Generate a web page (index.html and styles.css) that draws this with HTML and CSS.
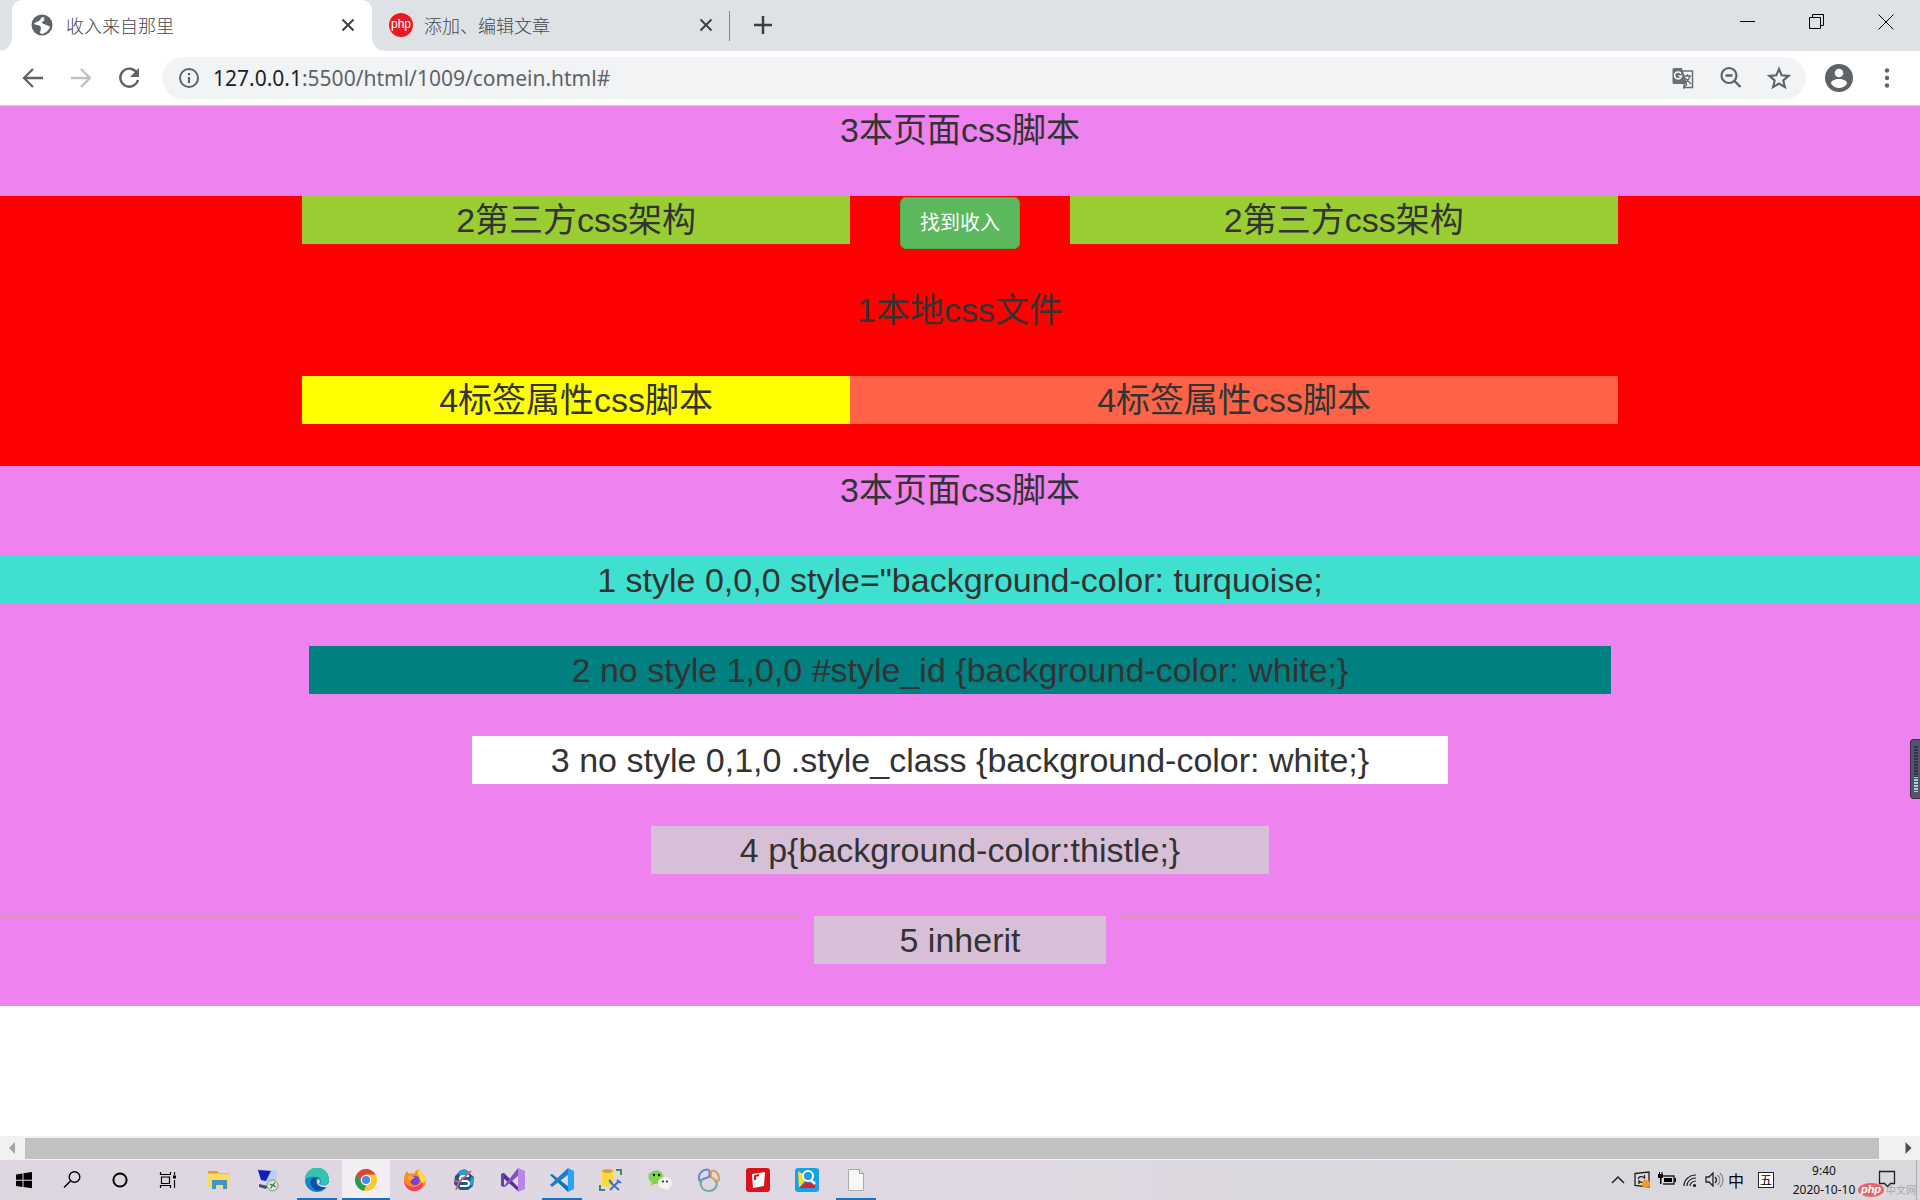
FILE: index.html
```html
<!DOCTYPE html>
<html lang="zh">
<head>
<meta charset="utf-8">
<title>收入来自那里</title>
<link rel="stylesheet" href="styles.css">
</head>
<body>
<header class="tabs">
  <div class="tab tab-active">
    <svg class="fav" viewBox="0 0 22 22"><circle cx="11" cy="11" r="10.500" fill="#5f6368"/><path d="M13 3c-4 0-3 3-5 4s-4 1-5 3l3 1c2 0 4 1 4 3l-1 5 2 1c4-1 7-4 8-7l-3-3h-4l-1-2 3-2z" fill="#fff"/><path d="M12 4l6 3 1 5-4-1-3-2 2-2z" fill="#5f6368"/></svg>
    <span class="tab-title">收入来自那里</span>
    <button class="tab-close" aria-label="关闭"><svg viewBox="0 0 14 14"><path d="M1.500 1.500l11 11M12.500 1.500l-11 11" stroke="#3c4043" stroke-width="2"/></svg></button>
  </div>
  <div class="tab">
    <span class="php-fav">php</span>
    <span class="tab-title">添加、编辑文章</span>
    <button class="tab-close" aria-label="关闭"><svg viewBox="0 0 14 14"><path d="M1.500 1.500l11 11M12.500 1.500l-11 11" stroke="#3c4043" stroke-width="2"/></svg></button>
  </div>
  <button class="new-tab" aria-label="新标签页"><svg viewBox="0 0 18 18"><path d="M9 0v18M0 9h18" stroke="#3c4043" stroke-width="2.500"/></svg></button>
  <div class="win">
    <button aria-label="最小化"><svg viewBox="0 0 16 16"><path d="M0 7.500h15" stroke="#000"/></svg></button>
    <button aria-label="还原"><svg viewBox="0 0 16 16"><path d="M.5 3.500h11v11H.5zM3.500 3.500v-3h11v11h-3" fill="none" stroke="#000"/></svg></button>
    <button aria-label="关闭"><svg viewBox="0 0 16 16"><path d="M.5.5l15 15M15.500.5l-15 15" stroke="#000"/></svg></button>
  </div>
</header>
<nav class="toolbar">
  <button class="nav-btn" aria-label="后退"><svg viewBox="0 0 24 24"><path d="M22 12H4M12 3l-9 9 9 9" fill="none" stroke="#5f6368" stroke-width="2.300"/></svg></button>
  <button class="nav-btn" aria-label="前进"><svg viewBox="0 0 24 24"><path d="M2 12h18M12 3l9 9-9 9" fill="none" stroke="#bdc1c6" stroke-width="2.300"/></svg></button>
  <button class="nav-btn" aria-label="刷新"><svg viewBox="0 0 24 24"><path d="M20 7a9 9 0 1 0 1 7" fill="none" stroke="#5f6368" stroke-width="2.400"/><path d="M22 2v9h-9z" fill="#5f6368"/></svg></button>
  <div class="omnibox">
    <svg class="ico" viewBox="0 0 24 24"><circle cx="12" cy="12" r="9" fill="none" stroke="#5f6368" stroke-width="2"/><path d="M12 11v6M12 7v2.200" stroke="#5f6368" stroke-width="2.200"/></svg>
    <a class="url" href="#"><b>127.0.0.1</b>:5500/html/1009/comein.html#</a>
    <button class="omni-btn" aria-label="翻译"><svg viewBox="0 0 24 24"><path d="M11 5h10.500v16.500H12" fill="none" stroke="#6b6f73" stroke-width="1.500"/><path d="M3 2h8l5 16H3a1.500 1.500 0 0 1-1.500-1.500v-13A1.500 1.500 0 0 1 3 2z" fill="#6b6f73"/><path d="M10 7.500A3.500 3.500 0 1 0 10.500 10H7.500" fill="none" stroke="#fff" stroke-width="1.500"/><path d="M13 10h7M16.500 8v2M19 10c-1 4-3 5-5 7M14 12l6 6M13 18v3.500l3-3.500" fill="none" stroke="#6b6f73" stroke-width="1.400"/></svg></button>
    <button class="omni-btn" aria-label="缩放"><svg viewBox="0 0 24 24"><circle cx="10" cy="9.500" r="7.500" fill="none" stroke="#5f6368" stroke-width="2.200"/><path d="M6.500 9.500h7M15 14.500l6.500 6.500" stroke="#5f6368" stroke-width="2.400"/></svg></button>
    <button class="omni-btn" aria-label="收藏"><svg viewBox="0 0 24 24"><path d="M12 3l2.700 6.300 6.800.6-5.200 4.500 1.600 6.700L12 17.500l-5.900 3.600 1.600-6.700-5.200-4.500 6.800-.6z" fill="none" stroke="#5f6368" stroke-width="2.100"/></svg></button>
  </div>
  <button class="avatar" aria-label="用户"><svg viewBox="0 0 28 28"><circle cx="14" cy="14" r="14" fill="#5f6368"/><circle cx="14" cy="9" r="4.300" fill="#fff"/><path d="M6 19.500c0-6 16-6 16 0-3.500 6-12.500 6-16 0z" fill="#fff"/></svg></button>
  <button class="nav-btn" aria-label="菜单"><svg viewBox="0 0 24 24" fill="#5f6368"><circle cx="12" cy="4.500" r="2.200"/><circle cx="12" cy="12" r="2.200"/><circle cx="12" cy="19.500" r="2.200"/></svg></button>
</nav>
<main class="page">
  <section class="violet"><p>3本页面css脚本</p></section>
  <section class="red">
    <div class="grid">
      <p class="green">2第三方css架构</p>
      <div class="mid"><button class="find">找到收入</button></div>
      <p class="green">2第三方css架构</p>
    </div>
    <p>1本地css文件</p>
    <div class="grid">
      <p class="yellow">4标签属性css脚本</p>
      <p class="tomato">4标签属性css脚本</p>
    </div>
  </section>
  <section class="violet">
    <p>3本页面css脚本</p>
    <p class="turquoise">1 style 0,0,0 style="background-color: turquoise;</p>
    <p class="teal">2 no style 1,0,0 #style_id {background-color: white;}</p>
    <p class="white">3 no style 0,1,0 .style_class {background-color: white;}</p>
    <p class="thistle">4 p{background-color:thistle;}</p>
    <div class="split"><hr><p class="inherit">5 inherit</p><hr></div>
  </section>
  <div class="meter"></div>
</main>
<div class="scroll">
  <svg viewBox="0 0 25 24"><path d="M15 6v12l-6-6z" fill="#a3a3a3"/></svg>
  <div class="thumb"></div>
  <svg class="scroll-end" viewBox="0 0 40 24"><path d="M26 6v12l6-6z" fill="#505050"/></svg>
</div>
<footer class="taskbar">
  <div class="sys">
    <button aria-label="开始"><svg viewBox="0 0 24 24"><path d="M4 6.500l6.500-1v6.300H4zM11.500 5.300L20 4v7.800h-8.500zM4 12.700h6.500V19L4 18zM11.500 12.700H20v7.600l-8.500-1.200z"/></svg></button>
    <button aria-label="搜索"><svg viewBox="0 0 24 24"><circle cx="14.500" cy="9" r="5.300" fill="none" stroke="#000" stroke-width="1.400"/><path d="M10.500 13L4 19.500" stroke="#000" stroke-width="1.500"/></svg></button>
    <button aria-label="Cortana"><svg viewBox="0 0 24 24"><circle cx="12" cy="12" r="6.600" fill="none" stroke="#000" stroke-width="2"/></svg></button>
    <button aria-label="任务视图"><svg viewBox="0 0 24 24"><path d="M4.500 4v2.500h10V4M5.500 9h8v6.500h-8zM4.500 20v-2.500h10V20M18.500 4v3M18.500 12v8" fill="none" stroke="#000" stroke-width="1.200"/><path d="M17 7.500h3v3h-3z"/></svg></button>
  </div>
  <div class="apps">
    <button aria-label="文件"><svg viewBox="0 0 24 24"><path d="M1 3h9l2 2h10v5H1z" fill="#dea024"/><path d="M1 5.500h22V20H1z" fill="#ffd968"/><path d="M5 21v-9h15v9h-4v-4H9v4z" fill="#3e96c9"/></svg></button>
    <button aria-label="远程"><svg viewBox="0 0 24 24"><path d="M1 1l20 1.500-1 13-14-2z" fill="#b8cef2"/><path d="M2 2l13 1-5 10-5-1z" fill="#1021ba"/><path d="M3 16l9 2-2 3-7-2z" fill="#454a78"/><circle cx="16.500" cy="17.500" r="5.500" fill="#d7e8d8" stroke="#829486"/><path d="M14 16l2.500 1.500-2 3M19 14.500l-2 2.500 2.500 2" fill="none" stroke="#277a38" stroke-width="1.200"/></svg></button>
    <button class="open" aria-label="Edge"><svg viewBox="0 0 24 24"><circle cx="12" cy="12" r="12" fill="#1685d0"/><path d="M0 12A12 12 0 0 1 24 11c0 6-5 7-9 5 2-3 1-7-4-7C6 8 2 9 0 12z" fill="#36c3ad"/><path d="M8 20c-6-6 0-13 5-10-4 2-3 10 8 9-3 4-10 5-13 1z" fill="#0c539f"/><path d="M12 12c2-2 4 1 2 4 3 2 8 2 10-1v3l-2 1c-6 1-11-2-10-7z" fill="#e0dae5"/></svg></button>
    <button class="open active" aria-label="Chrome"><svg viewBox="0 0 24 24"><circle cx="12" cy="12" r="11" fill="#fbc72e"/><path d="M2.500 6.500A11 11 0 0 1 21.500 6.500H12L8 15z" fill="#dc4436"/><path d="M2.500 6.500L8 15l4 2.500-2 5.300A11 11 0 0 1 2.500 6.500z" fill="#299a50"/><circle cx="12" cy="12" r="5.200" fill="#fff"/><circle cx="12" cy="12" r="4.100" fill="#438af5"/></svg></button>
    <button aria-label="Firefox"><svg viewBox="0 0 24 24"><path d="M1 12c0-4 1-6 3-9l2 3c2-1 3-1 5 0 1-3 3-4 5-5 0 3 6 5 7 11 0 14-22 14-22 0z" fill="#ff8928"/><path d="M1 13c3 7 14 9 19 0 1 14-18 13-19 0z" fill="#f83b57"/><path d="M16 1c0 3 6 5 7 11-2 5-5 3-6-1-1-4-4-5-1-10z" fill="#ffda3a"/><circle cx="12" cy="12.500" r="4.800" fill="#7d40d8"/><path d="M5 8c3-1 4 1 7 1-1 2-4 2-4 4-3 0-4-3-3-5z" fill="#ffb12e"/></svg></button>
    <button aria-label="工具"><svg viewBox="0 0 24 24"><path d="M6 5c3-5 10-4 11 0l5 4-1 9-5 4H8l-6-6 1-8z" fill="#22568f"/><path d="M6 5c3-5 10-4 11 0l-3 3H8zM20 8l2 4-2 6-3-2z" fill="#2a9ccc"/><path d="M17 8h-6c-4 0-4 5 0 5h3c4 0 4 5 0 5H8" fill="none" stroke="#fff" stroke-width="2"/><path d="M2 12l5 2L19 3M7 14l-3 8" fill="none" stroke="#d8606a" stroke-width="1.800"/></svg></button>
    <button aria-label="Visual Studio"><svg viewBox="0 0 24 24"><path d="M0 6l3-1 15 15-1 3L1 9z" fill="#50309a"/><path d="M0 6l3-1v14l-3-1z" fill="#67429f"/><path d="M2 19L17 0l1 7L4 19z" fill="#8350bd"/><path d="M17 0l7 3v18l-7 3z" fill="#b886ec"/></svg></button>
    <button class="open" aria-label="VS Code"><svg viewBox="0 0 24 24"><path d="M0 7l2-1 17 13-1 5z" fill="#1273b5"/><path d="M0 17l2 2L19 6l-1-6z" fill="#1681ca"/><path d="M18 0l6 3v18l-6 3z" fill="#28a5f2"/></svg></button>
    <button aria-label="数据库"><svg viewBox="0 0 24 24"><path d="M3 3v14c2 2 8 2 11 0V3z" fill="#ffd83e"/><ellipse cx="8.500" cy="3" rx="5.500" ry="2" fill="#cda53a"/><path d="M17 2h5v5M1 17v5h5" fill="none" stroke="#438b55" stroke-width="2"/><path d="M11 14l9 8M20 13l-9 9M10 12l3 3M18 12l4 3" stroke="#3b70ba" stroke-width="1.800"/></svg></button>
    <button aria-label="微信"><svg viewBox="0 0 24 24"><path d="M3 18l1-3C-5 7 5 1 11 3s8 14-5 13z" fill="#83d34b"/><circle cx="6" cy="7" r="1.200"/><circle cx="11" cy="7" r="1.200"/><ellipse cx="17" cy="15" rx="7" ry="6" fill="#f3f3f3"/><path d="M20 19l2 3-5-1z" fill="#f3f3f3"/><circle cx="15" cy="13.500" r=".9"/><circle cx="19" cy="13.500" r=".9"/></svg></button>
    <button aria-label="Navicat"><svg viewBox="0 0 24 24" fill="none" stroke-width="2"><path d="M3 13C0 8 4 2 10 1.500c3 0 3 2 2 7.500l-6 2z" stroke="#6687d2"/><path d="M14 4c1-3 8-1 8 7 0 3-2 3-4 1l-4-3z" stroke="#e09b52"/><path d="M6 11c-5 5-1 12 6 12 6 0 10-6 6-11" stroke="#6dae99"/></svg></button>
    <button aria-label="阅读"><svg viewBox="0 0 24 24"><rect width="24" height="24" rx="3" fill="#db111b"/><path d="M6 6l13-2-1 14-11 2z" fill="#fff"/><path d="M9 12V8l4-1" fill="none" stroke="#db111b" stroke-width="2"/></svg></button>
    <button aria-label="查看"><svg viewBox="0 0 24 24"><rect width="24" height="24" rx="3" fill="#16a3e4"/><path d="M3 3l8 5-2 6-5 6z" fill="#ffdd29"/><path d="M4 20l7-6 9 2v4z" fill="#d7223c"/><circle cx="13" cy="8" r="5" fill="#169ee0" stroke="#fff" stroke-width="2"/><path d="M16 12l4 4" stroke="#fff" stroke-width="2.500"/></svg></button>
    <button class="open" aria-label="文档"><svg viewBox="0 0 24 24"><path d="M4.500 1.500h11l4 4v17h-15z" fill="#f7f7f7" stroke="#aaa"/><path d="M15.500 1.500v4h4" fill="none" stroke="#999"/></svg></button>
  </div>
  <div class="tray">
    <svg viewBox="0 0 24 24"><path d="M6 15l6-6 6 6" fill="none" stroke="#222" stroke-width="1.500"/></svg>
    <svg viewBox="0 0 24 24"><path d="M5 5.500l14-1.500v15L5 17.500z" fill="none" stroke="#222" stroke-width="1.300"/><path d="M8.500 11c0-3 4-3 6-1V7M15 12c0 3-4 3-6 1v3" fill="none" stroke="#222" stroke-width="1.300"/><circle cx="16" cy="16" r="4" fill="#f79a20"/></svg>
    <svg viewBox="0 0 24 24"><path d="M8 8h12v8H9" fill="none" stroke="#222" stroke-width="1.400"/><path d="M10 10h8v4h-8zM20.500 10h1.500v4h-1.500zM4 6h5v4H4zM5 4h1v2H5zM7.500 4h1v2h-1zM6 10h1.500v6H6z"/></svg>
    <svg viewBox="0 0 24 24" fill="none" stroke="#222" stroke-width="1.200"><path d="M6 18C6 12 11 7 18 7M9 18c0-5 4-8 9-8M12 18c0-3 3-5 6-5"/><circle cx="16.500" cy="17.500" r="1" fill="#222"/></svg>
    <svg viewBox="0 0 24 24" fill="none" stroke="#222" stroke-width="1.300"><path d="M4 9h3l4-4v13l-4-4H4zM13 9c2 2 2 4 0 6"/><path d="M15.500 7c3 3 3 7 0 10M18 5c4 4 4 10 0 14" stroke="#888"/></svg>
    <span class="ime">中</span>
    <span class="wubi">五</span>
  </div>
  <div class="clock"><time>9:40</time><time>2020-10-10</time></div>
  <div class="note">
    <svg viewBox="0 0 20 20"><path d="M2.500 2.500h15v12h-4l-3 3-3-3h-5z" fill="none" stroke="#222" stroke-width="1.300"/></svg>
    <div class="mark"><span class="mark-php">php</span><span class="mark-cn">中文网</span></div>
  </div>
</footer>
</body>
</html>
```
FILE: styles.css
```css
* { box-sizing: border-box; }
html, body { height: 100%; }
body { margin: 0; display: flex; flex-direction: column; overflow: hidden; background: #fff; font-family: "Liberation Sans", "Noto Sans CJK SC", sans-serif; }
button { border: 0; padding: 0; background: none; display: flex; align-items: center; justify-content: center; font-family: inherit; }
svg { display: block; flex: none; }
p { margin: 0; }

.tabs { height: 51px; flex: none; display: flex; align-items: stretch; padding-left: 12px; background: #dee1e6; }
.tab { width: 358px; display: flex; align-items: center; padding: 0 16px 2px 17px; position: relative; }
.tab-active { width: 360px; background: #fff; border-radius: 10px 10px 0 0; padding: 0 16px 2px 19px; }
.tab-active::before, .tab-active::after { content: ""; position: absolute; bottom: 0; width: 12px; height: 12px; }
.tab-active::before { left: -12px; background: radial-gradient(circle at 0 0, #dee1e6 11px, #fff 12px); }
.tab-active::after { right: -12px; background: radial-gradient(circle at 100% 0, #dee1e6 11px, #fff 12px); }
.tab:nth-child(2)::after { content: ""; position: absolute; right: 0; top: 11px; width: 1px; height: 30px; background: #80868b; }
.fav { width: 22px; height: 22px; margin-right: 13px; }
.php-fav { width: 24px; height: 24px; margin-right: 11px; border-radius: 50%; background: #e61b23; box-shadow: 0 0 0 1px #f6dcdf; color: #fff; font-size: 12px; line-height: 22px; text-align: center; }
.tab-title { flex: 1; font: 300 18px/24px "Noto Sans CJK SC", sans-serif; color: #45494d; }
.tab-close { width: 16px; height: 24px; }
.tab-close svg { width: 14px; height: 14px; }
.new-tab { width: 66px; padding-bottom: 2px; }
.new-tab svg { width: 18px; height: 18px; }
.win { display: flex; margin-left: auto; height: 43px; }
.win button { width: 69px; }
.win svg { width: 16px; height: 16px; }

.toolbar { height: 55px; flex: none; display: flex; align-items: center; padding: 0 9px; border-bottom: 1px solid #dfc9e2; }
.nav-btn { width: 48px; height: 42px; }
.nav-btn svg, .omni-btn svg, .ico { width: 24px; height: 24px; }
.omnibox { flex: 1; height: 42px; margin: 0 9px; padding: 0 3px 0 15px; border-radius: 21px; background: #f1f3f4; display: flex; align-items: center; }
.url { flex: 1; margin-left: 12px; color: #5f6368; text-decoration: none; font: 21px/28px "Noto Sans", sans-serif; }
.url b { color: #202124; font-weight: 400; }
.omni-btn { width: 48px; height: 42px; }
.avatar { width: 48px; height: 42px; }
.avatar svg { width: 28px; height: 28px; }

.page { flex: 1; position: relative; color: #333; font-size: 34px; line-height: 48px; text-align: center; }
.violet, .red { display: flex; flex-direction: column; gap: 42px; padding-bottom: 42px; }
.violet { background: violet; }
.red { background: red; }
.grid { display: grid; grid-template-columns: 5fr 2fr 5fr; grid-auto-rows: 48px; width: 69%; max-width: 1316px; margin: 0 auto; }
.green { background: yellowgreen; }
.yellow { background: yellow; }
.tomato { background: tomato; grid-column: span 2; }
.mid { display: flex; justify-content: center; align-items: flex-start; padding-top: 1px; }
.find { width: 120px; height: 52px; flex: none; border: 1px solid #4cae4c; border-radius: 6px; background: #5cb85c; color: #fff; font-size: 20px; line-height: 28px; }
.turquoise { background: turquoise; }
.teal, .white, .thistle { align-self: center; }
.teal { background: teal; width: 68%; max-width: 1302px; }
.white { background: #fff; width: 51%; max-width: 976px; }
.thistle { background: thistle; width: 33%; max-width: 618px; }
.split { display: flex; gap: 14px; }
.split hr { flex: 1; height: 2px; margin: 0; border: 0; background: #d69aa6; }
.inherit { background: thistle; width: 292px; }
.meter { position: absolute; right: 0; top: 633px; width: 10px; height: 60px; border: 1px solid #402c4b; border-right: 0; border-radius: 4px 0 0 4px; background: #55546e; }
.meter::before { content: ""; position: absolute; left: 3px; top: 6px; width: 4px; height: 46px; background: linear-gradient(transparent 31px, #9fd5cf 31px), #333546; mask-image: repeating-linear-gradient(#000 0 2px, transparent 2px 3px); }

.scroll { height: 24px; flex: none; display: flex; background: #f1f1f1; }
.scroll svg { width: 25px; height: 24px; }
.scroll .scroll-end { width: 41px; }
.thumb { flex: 1; margin: 2px 0 1px; background: #c1c1c1; }

.taskbar { height: 40px; flex: none; display: flex; background: linear-gradient(90deg, #ddd5df, #e0d8e3 50%, #d9d8dd 80%); }
.sys, .apps { display: flex; }
.sys button { width: 48px; }
.sys svg, .apps svg { width: 24px; height: 24px; }
.apps { margin-left: 3px; gap: 1px; }
.apps button { width: 48px; position: relative; }
.active { background: #f3eef4; }
.open::after { content: ""; position: absolute; left: 4px; right: 4px; bottom: 0; height: 2px; background: #1473c8; }
.active::after { left: 0; right: 0; }
.tray { display: flex; align-items: center; margin-left: auto; }
.tray svg { width: 24px; height: 24px; }
.ime { width: 20px; font: 16px/24px "Noto Sans CJK SC", sans-serif; text-align: center; }
.wubi { width: 16px; height: 16px; margin: 0 13px 0 12px; border: 1px solid #222; background: #fff; font: 12px/14px "Noto Sans CJK SC", sans-serif; text-align: center; }
.clock { width: 74px; display: flex; flex-direction: column; align-items: center; padding-top: 1px; font: 12px/19px "Noto Sans", sans-serif; color: #111; }
.note { width: 56px; position: relative; display: flex; align-items: center; justify-content: center; padding: 0 4px 2px 0; border-right: 1px solid #aaa; margin-right: 3px; }
.note svg { width: 20px; height: 20px; }
.mark { position: absolute; left: -3px; bottom: 3px; display: flex; align-items: center; }
.mark-php { width: 26px; height: 14px; border-radius: 50%; background: #e9636a; color: #fff; font: italic bold 11px/12px "Liberation Sans", sans-serif; text-align: center; }
.mark-cn { color: #a8a8ae; font: 10px/14px "Noto Sans CJK SC", sans-serif; margin-left: 2px; }
```
